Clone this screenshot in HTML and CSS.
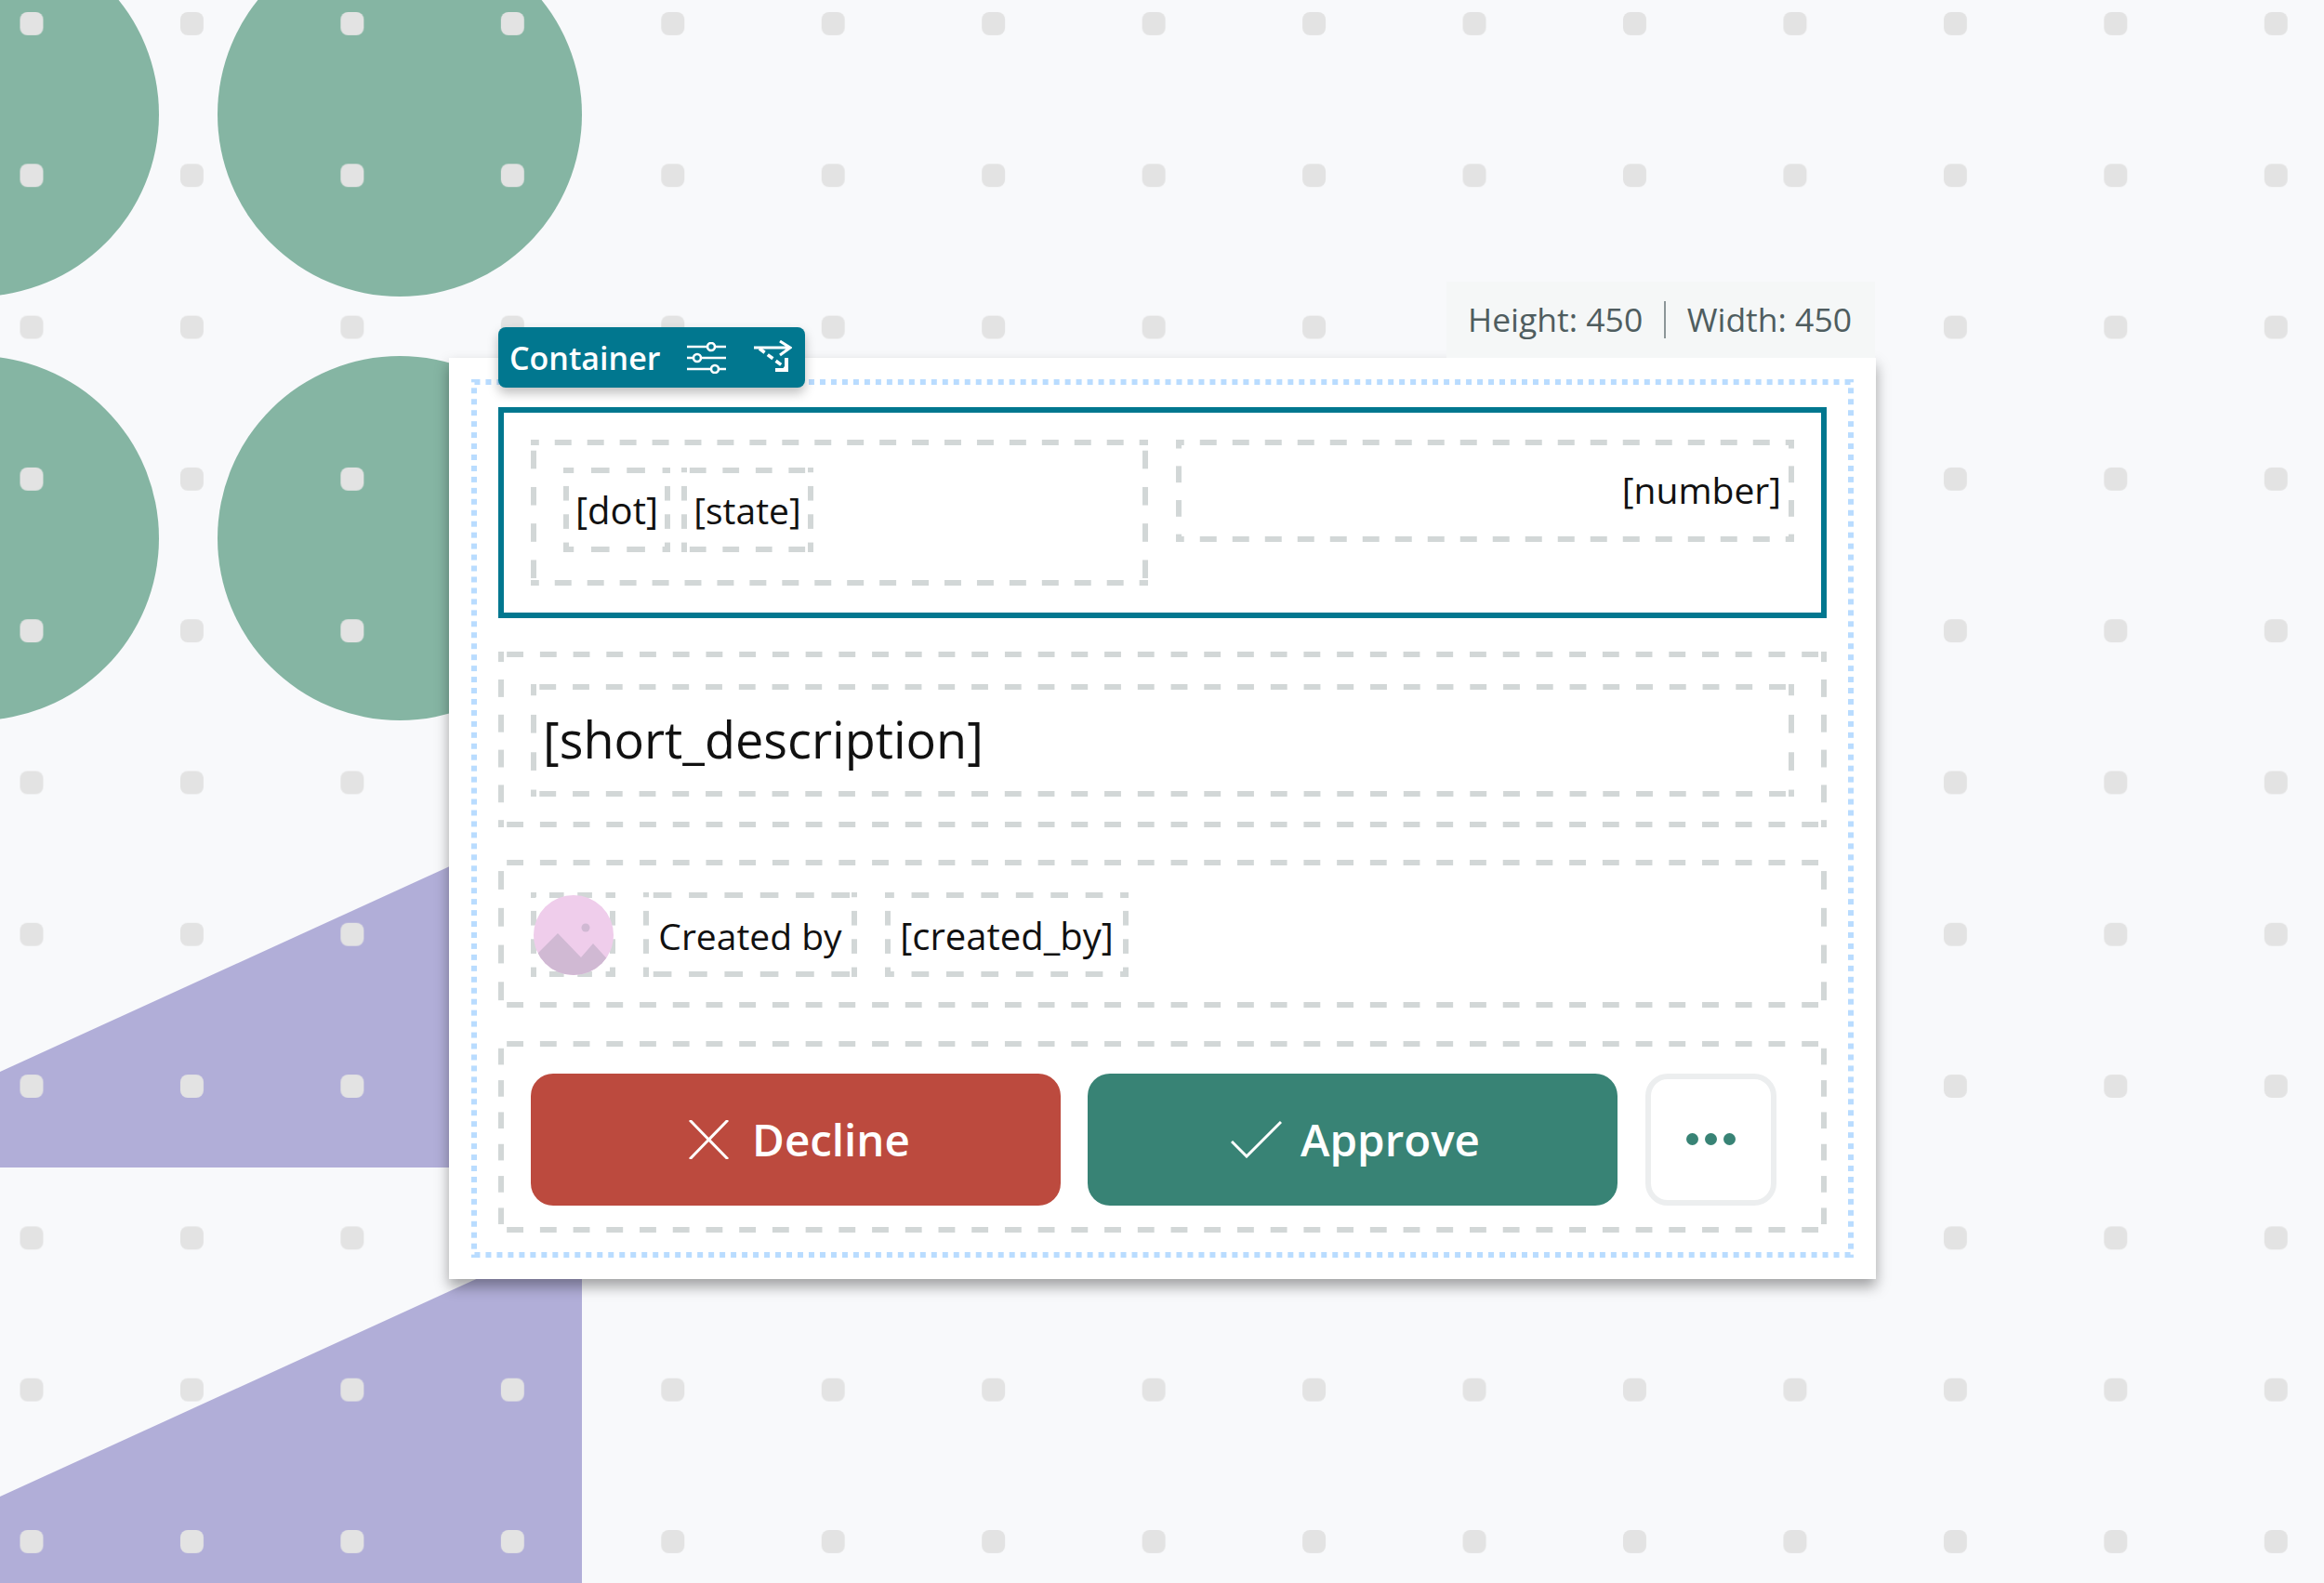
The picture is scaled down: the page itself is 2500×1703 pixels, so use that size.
FILE: index.html
```html
<!DOCTYPE html>
<html lang="en">
<head>
<meta charset="utf-8">
<title>Container</title>
<link rel="stylesheet" href="styles.css">
</head>
<body>
<svg class="backdrop" width="2500" height="1703" viewBox="0 0 2500 1703" aria-hidden="true">
  <defs>
    <pattern id="dots" patternUnits="userSpaceOnUse" x="21.5" y="13" width="172.45" height="163.3">
      <rect width="25" height="25" rx="8" fill="#e3e3e3"/>
    </pattern>
  </defs>
  <circle cx="-25" cy="123" r="196" fill="#85b5a3"/>
  <circle cx="430" cy="123" r="196" fill="#85b5a3"/>
  <circle cx="-25" cy="579" r="196" fill="#85b5a3"/>
  <circle cx="430" cy="579" r="196" fill="#85b5a3"/>
  <polygon points="0,1153 626,867 626,1256 0,1256" fill="#b1aed8"/>
  <polygon points="0,1610 626,1324 626,1703 0,1703" fill="#b1aed8"/>
  <rect width="2500" height="1703" fill="url(#dots)"/>
</svg>
<main class="card">
  <div class="size-label">
    <span>Height: 450</span>
    <i class="size-sep"></i>
    <span>Width: 450</span>
  </div>
  <div class="tab">
    <span class="tab-name">Container</span>
    <svg class="tab-icon-a" width="42" height="34" viewBox="0 0 42 34" fill="none" stroke="#fff" stroke-width="2.6">
      <path d="M0 5H42M0 17H42M0 29H42"/>
      <circle cx="26" cy="5" r="4" fill="#01778f"/>
      <circle cx="11" cy="17" r="4" fill="#01778f"/>
      <circle cx="30" cy="29" r="4" fill="#01778f"/>
    </svg>
    <svg class="tab-icon-b" width="42" height="34" viewBox="0 0 42 34" fill="none" stroke="#fff" stroke-width="3">
      <path d="M1 8H39M29 1L40 8L29 16"/>
      <path d="M7 9L35 30" stroke-dasharray="7 4" stroke-width="3.6"/>
      <path d="M36 19V32H24" stroke-width="4"/>
    </svg>
  </div>
  <div class="frame">
    <section class="row-head">
      <div class="dash head-left">
        <div class="dash cell cell-dot">[dot]</div>
        <div class="dash cell cell-state">[state]</div>
      </div>
      <div class="dash head-right">[number]</div>
    </section>
    <section class="dash row-desc">
      <div class="dash desc">[short_description]</div>
    </section>
    <section class="dash row-meta">
      <div class="dash cell cell-avatar">
        <svg width="86" height="86" viewBox="0 0 86 86">
          <defs><clipPath id="round"><circle cx="43" cy="43" r="43"/></clipPath></defs>
          <g clip-path="url(#round)">
            <rect width="86" height="86" fill="#efcdeb"/>
            <path d="M0 67L26 41L51 67L64 52L86 76V86H0Z" fill="#d0b9d3"/>
            <circle cx="56" cy="35" r="4.5" fill="#d0b9d3"/>
          </g>
        </svg>
      </div>
      <div class="dash cell cell-created">Created by</div>
      <div class="dash cell cell-author">[created_by]</div>
    </section>
    <section class="dash row-actions">
      <button class="btn btn-decline">
        <svg width="43" height="42" viewBox="0 0 43 42" fill="none" stroke="#fff" stroke-width="3"><path d="M1 0L42 42M42 0L1 42"/></svg>
        Decline
      </button>
      <button class="btn btn-approve">
        <svg width="55" height="40" viewBox="0 0 55 40" fill="none" stroke="#fff" stroke-width="3"><path d="M1 22L17 38L54 1"/></svg>
        Approve
      </button>
      <button class="btn-more" aria-label="More"><i></i><i></i><i></i></button>
    </section>
  </div>
</main>
</body>
</html>
```
FILE: styles.css
```css
* { box-sizing: border-box; }
html, body { margin: 0; height: 100%; }
body {
  position: relative;
  width: 2500px;
  height: 1703px;
  overflow: hidden;
  padding: 385px 0 0 483px;
  background: #f8f9fb;
  font-family: "Open Sans", sans-serif;
  color: #111;
}
.backdrop { position: absolute; left: 0; top: 0; }

.card {
  position: relative;
  width: 1535px;
  height: 991px;
  padding: 23px 24px;
  background: #fff;
  box-shadow: 0 8px 14px rgba(0, 0, 0, 0.36);
}
.size-label {
  position: absolute;
  right: 1px;
  bottom: 100%;
  height: 82px;
  width: 461px;
  padding: 0 25px 0 23px;
  display: flex;
  align-items: center;
  justify-content: space-between;
  background: #f5f7f7;
  color: #4f5d5f;
  font-size: 35.5px;
  line-height: 1;
}
.size-sep { width: 2px; height: 40px; background: #8c9698; }
.tab {
  position: absolute;
  left: 53px;
  top: -33px;
  width: 330px;
  height: 65px;
  z-index: 2;
  display: flex;
  align-items: center;
  padding-left: 12px;
  background: #01778f;
  border-radius: 8px;
  box-shadow: 0 6px 12px rgba(0, 0, 0, 0.25);
  color: #fff;
  font-size: 34px;
  font-weight: 600;
}
.tab-name { width: 191px; }
.tab-icon-a { margin-right: 30px; }
.tab-icon-b { margin-top: -4px; margin-left: -1px; }

.frame {
  height: 100%;
  padding: 30px 29px 27px;
  display: flex;
  flex-direction: column;
  justify-content: space-between;
  background-image:
    linear-gradient(90deg, #b9dcff 25%, transparent 25% 75%, #b9dcff 75%),
    linear-gradient(90deg, #b9dcff 25%, transparent 25% 75%, #b9dcff 75%),
    linear-gradient(#b9dcff 25%, transparent 25% 75%, #b9dcff 75%),
    linear-gradient(#b9dcff 25%, transparent 25% 75%, #b9dcff 75%);
  background-size: 12px 6px, 12px 6px, 6px 12px, 6px 12px;
  background-repeat: round no-repeat, round no-repeat, no-repeat round, no-repeat round;
  background-position: top, bottom, left, right;
}
.dash {
  background-image:
    linear-gradient(90deg, #d2d7d7 25%, transparent 25% 75%, #d2d7d7 75%),
    linear-gradient(90deg, #d2d7d7 25%, transparent 25% 75%, #d2d7d7 75%),
    linear-gradient(#d2d7d7 25%, transparent 25% 75%, #d2d7d7 75%),
    linear-gradient(#d2d7d7 25%, transparent 25% 75%, #d2d7d7 75%);
  background-size: 35.5px 6px, 35.5px 6px, 6px 35.5px, 6px 35.5px;
  background-repeat: round no-repeat, round no-repeat, no-repeat round, no-repeat round;
  background-position: top, bottom, left, right;
}

.row-head {
  height: 227px;
  padding: 29px;
  border: 6px solid #01778f;
  display: flex;
  align-items: flex-start;
  justify-content: space-between;
}
.head-left {
  width: 664px;
  height: 157px;
  padding: 30px 35px;
  display: flex;
  gap: 12px;
}
.head-right {
  width: 665px;
  height: 110px;
  padding: 0 14px 3px 0;
  display: flex;
  align-items: center;
  justify-content: flex-end;
  font-size: 39px;
}
.cell {
  height: 91px;
  display: flex;
  align-items: center;
  justify-content: center;
  font-size: 39px;
}
.cell-dot { width: 115px; font-size: 40px; }
.cell-state { width: 142px; }

.row-desc {
  height: 189px;
  padding: 35px 35px 32px;
}
.desc {
  height: 121px;
  padding: 0 0 2px 13px;
  display: flex;
  align-items: center;
  font-size: 54px;
}

.row-meta {
  height: 159px;
  padding: 35px;
  display: flex;
  gap: 30px;
}
.cell-avatar { width: 91px; }
.cell-created { width: 230px; padding-top: 2px; }
.cell-author { width: 262px; padding-top: 2px; font-size: 40px; }

.row-actions {
  height: 206px;
  padding: 35px 35px 29px;
  display: flex;
  gap: 29px;
}
.btn {
  width: 570px;
  height: 142px;
  border: 0;
  border-radius: 24px;
  color: #fff;
  font: 600 47.5px "Open Sans", sans-serif;
  display: flex;
  align-items: center;
  justify-content: center;
  gap: 25px;
  padding: 0 0 0 8px;
}
.btn-decline { background: #bc4a3e; }
.btn-approve { background: #388375; gap: 20px; padding-left: 6px; }
.btn-more {
  width: 141px;
  height: 142px;
  margin-left: 1px;
  padding: 0;
  border: 6px solid #eceeef;
  border-radius: 24px;
  background: #fff;
  display: flex;
  align-items: center;
  justify-content: center;
  gap: 7px;
}
.btn-more i {
  width: 13px;
  height: 13px;
  border-radius: 50%;
  background: #388375;
}
```
